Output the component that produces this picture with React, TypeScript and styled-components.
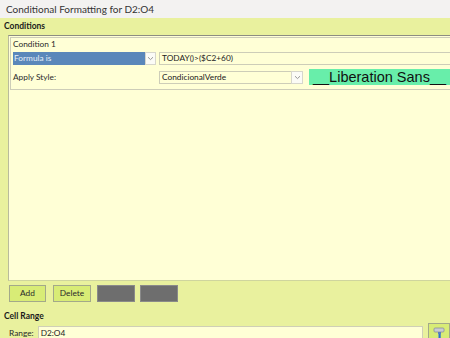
import React from "react";
import styled, { createGlobalStyle } from "styled-components";

const GlobalStyle = createGlobalStyle`
  html, body {
    margin: 0;
    padding: 0;
    width: 450px;
    height: 338px;
    overflow: hidden;
    background: #e9f19e;
  }
  * {
    box-sizing: border-box;
  }
`;

const UI_FONT = `"Lato", "Open Sans", sans-serif`;

export default function App() {
  return (
    <>
      <GlobalStyle />
      <Window>
        <TitleBar>Conditional Formatting for D2:O4</TitleBar>
        <Content>
          <SectionTitle $height={17} $pad={0}>Conditions</SectionTitle>
          <ConditionsPanel>
            <ConditionBox>
              <Caption>Condition 1</Caption>
              <Row>
                <TypeSelect>Formula is</TypeSelect>
                <ArrowBox $width={11}>
                  <Chevron />
                </ArrowBox>
                <FormulaInput>TODAY()&gt;($C2+60)</FormulaInput>
              </Row>
              <StyleRow>
                <FieldLabel>Apply Style:</FieldLabel>
                <StyleSelect>CondicionalVerde</StyleSelect>
                <ArrowBox $width={12}>
                  <Chevron />
                </ArrowBox>
                <Preview>__Liberation Sans__</Preview>
              </StyleRow>
            </ConditionBox>
          </ConditionsPanel>
          <ButtonBar>
            <ActionButton $width={37}>Add</ActionButton>
            <ActionButton $width={38} $gap={7}>Delete</ActionButton>
            <ActionButton $width={38} $gap={6} $disabled />
            <ActionButton $width={38} $gap={5} $disabled />
          </ButtonBar>
          <SectionTitle $height={16} $pad={5}>Cell Range</SectionTitle>
          <RangeRow>
            <RangeLabel>Range:</RangeLabel>
            <RangeInput>D2:O4</RangeInput>
            <PickButton>
              <svg width="14" height="14" viewBox="0 0 14 14">
                <rect x="1" y="1" width="10" height="4" rx="1" fill="#c9ccd2" stroke="#8a8f99" strokeWidth="0.8" />
                <rect x="5" y="5" width="3" height="2" fill="#5a7fc0" />
                <rect x="5.5" y="7" width="2.2" height="7" fill="#2f6fd0" />
              </svg>
            </PickButton>
          </RangeRow>
        </Content>
      </Window>
    </>
  );
}

function Chevron() {
  return (
    <svg width="7" height="5" viewBox="0 0 7 5">
      <path d="M1 1.2 L3.5 3.6 L6 1.2" fill="none" stroke="#8c8c8c" strokeWidth="0.9" />
    </svg>
  );
}

const Window = styled.div`
  width: 450px;
  height: 338px;
  display: flex;
  flex-direction: column;
  font-family: ${UI_FONT};
  color: #262626;
`;

const TitleBar = styled.div`
  height: 18px;
  line-height: 18px;
  padding-left: 6px;
  background: #f3f2f1;
  font-size: 10px;
  color: #333;
  white-space: nowrap;
`;

const Content = styled.div`
  flex: 1;
  background: #e9f19e;
  display: flex;
  flex-direction: column;
`;

const SectionTitle = styled.div<{ $height: number; $pad: number }>`
  height: ${(p) => p.$height + p.$pad + 2}px;
  padding-top: ${(p) => p.$pad}px;
  line-height: ${(p) => p.$height}px;
  padding-left: 4px;
  font-size: 8.5px;
  font-weight: 700;
  color: #1a1a1a;
`;

const ConditionsPanel = styled.div`
  margin-top: -2px;
  margin-left: 8px;
  width: 470px;
  height: 246px;
  background: #ffffd6;
  border-top: 1px solid #8d8d82;
  border-left: 1px solid #b9bb9c;
  border-bottom: 1px solid #cfd59e;
  padding: 1px 0 0 1px;
`;

const ConditionBox = styled.div`
  height: 53px;
  border: 1px solid #cdcdb8;
  border-right: none;
  padding-left: 2px;
`;

const Caption = styled.div`
  height: 14px;
  line-height: 13px;
  font-size: 8.3px;
  color: #2a2a2a;
`;

const Row = styled.div`
  display: flex;
  align-items: stretch;
  height: 13px;
`;

const StyleRow = styled.div`
  display: flex;
  align-items: center;
  height: 20px;
  margin-top: 2px;
`;

const TypeSelect = styled.div`
  width: 132px;
  background: #5a87ba;
  color: #e6eef8;
  font-size: 8.3px;
  line-height: 13px;
  padding-left: 1px;
`;

const ArrowBox = styled.div<{ $width: number }>`
  width: ${(p) => p.$width}px;
  height: 13px;
  background: #fbfbf6;
  border: 1px solid #d6d6cc;
  display: flex;
  align-items: center;
  justify-content: center;
`;

const FormulaInput = styled.div`
  flex: 1;
  margin-left: 3px;
  border: 1px solid #cdcdb8;
  border-right: none;
  font-size: 8.3px;
  line-height: 11px;
  padding-left: 2px;
  color: #222;
`;

const FieldLabel = styled.div`
  width: 146px;
  font-size: 8.3px;
  color: #2a2a2a;
`;

const StyleSelect = styled.div`
  width: 132px;
  height: 13px;
  border: 1px solid #cdcdb8;
  border-right: none;
  font-size: 8.3px;
  line-height: 11px;
  padding-left: 2px;
  color: #222;
`;

const Preview = styled.div`
  margin-left: 6px;
  width: 141px;
  height: 16px;
  background: #68eeaa;
  font-family: "Liberation Sans", Arial, sans-serif;
  font-size: 14.5px;
  line-height: 16px;
  color: #111;
  white-space: nowrap;
  text-align: center;
`;

const ButtonBar = styled.div`
  display: flex;
  height: 22px;
  padding: 4px 0 1px 9px;
`;

const ActionButton = styled.div<{ $width: number; $gap?: number; $disabled?: boolean }>`
  width: ${(p) => p.$width}px;
  height: 17px;
  margin-left: ${(p) => p.$gap ?? 0}px;
  background: ${(p) => (p.$disabled ? "#6e6e6e" : "#d8ec76")};
  border: 1px solid ${(p) => (p.$disabled ? "#8a8a8a" : "#a3a98a")};
  font-size: 8.3px;
  line-height: 15px;
  text-align: center;
  color: #2a2a2a;
`;

const RangeRow = styled.div`
  display: flex;
  align-items: flex-start;
  padding-left: 9px;
`;

const RangeLabel = styled.div`
  width: 29px;
  padding-top: 1px;
  line-height: 12px;
  font-size: 8.3px;
  color: #2a2a2a;
`;

const RangeInput = styled.div`
  width: 390px;
  height: 16px;
  background: #ffffd6;
  border: 1px solid #cfcfb6;
  font-size: 8.3px;
  line-height: 12px;
  padding-left: 2px;
  color: #222;
`;

const PickButton = styled.div`
  margin-left: 5px;
  margin-top: -3px;
  width: 22px;
  height: 20px;
  background: #d8ec76;
  border: 1px solid #a3a98a;
  display: flex;
  align-items: flex-start;
  justify-content: flex-start;
  padding: 3px 0 0 4px;
`;
